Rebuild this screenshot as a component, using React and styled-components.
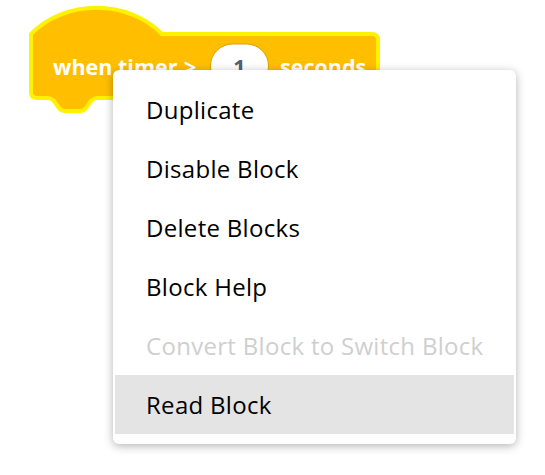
import React from "react";
import styled, { createGlobalStyle } from "styled-components";

const Global = createGlobalStyle`
  html, body { margin: 0; padding: 0; background: #ffffff; }
  body { width: 545px; height: 475px; overflow: hidden; }
`;

const Workspace = styled.div`
  position: relative;
  width: 545px;
  height: 475px;
  background: #ffffff;
`;

const BlockSvg = styled.svg`
  display: block;
  width: 400px;
  height: 130px;
`;

const BlockLabel = styled.text`
  font-family: "Open Sans", "Noto Sans", sans-serif;
  font-weight: 700;
  font-size: 21.5px;
  fill: ${(p) => p.$color || "#ffffff"};
`;

const Menu = styled.div`
  position: absolute;
  left: 113px;
  top: 70px;
  width: 403px;
  box-sizing: border-box;
  padding: 10px 2px;
  background: #ffffff;
  border-radius: 6px;
  box-shadow: 0 2px 10px rgba(0, 0, 0, 0.3);
  display: flex;
  flex-direction: column;
`;

const MenuItem = styled.div`
  height: 59px;
  display: flex;
  align-items: center;
  padding-left: 31px;
  font-family: "Open Sans", "Noto Sans", sans-serif;
  font-size: 24px;
  letter-spacing: 0.3px;
  color: ${(p) => (p.$disabled ? "#cfcfcf" : "#000000")};
  background: ${(p) => (p.$active ? "#e4e4e4" : "transparent")};
  white-space: nowrap;
`;

const blockPath = [
  "M 31 34",
  "C 65 -1 128 -1 162 34",
  "H 372",
  "Q 378 34 378 40",
  "V 92",
  "Q 378 98 372 98",
  "H 97",
  "C 94 98 93 99.5 91 101",
  "L 86 108",
  "C 84.5 110 83 111 80 111",
  "H 65",
  "C 62 111 60.5 110 59 108",
  "L 54 101",
  "C 52.5 99.5 51 98 48 98",
  "H 37",
  "Q 31 98 31 92",
  "Z",
].join(" ");

function HatBlock() {
  return (
    <BlockSvg viewBox="0 0 400 130">
      <path
        d={blockPath}
        fill="#FFBF00"
        stroke="#FFF200"
        strokeWidth="4"
        strokeLinejoin="round"
      />
      <BlockLabel x="53" y="75">when</BlockLabel>
      <BlockLabel x="118" y="75">timer</BlockLabel>
      <BlockLabel x="184" y="75">&gt;</BlockLabel>
      <rect
        x="210.5"
        y="44"
        width="58"
        height="44"
        rx="22"
        fill="#ffffff"
        stroke="#D9A200"
        strokeWidth="1"
      />
      <BlockLabel x="239.5" y="75" textAnchor="middle" $color="#575E75">
        1
      </BlockLabel>
      <BlockLabel x="280" y="75">seconds</BlockLabel>
    </BlockSvg>
  );
}

const items = [
  { label: "Duplicate" },
  { label: "Disable Block" },
  { label: "Delete Blocks" },
  { label: "Block Help" },
  { label: "Convert Block to Switch Block", disabled: true },
  { label: "Read Block", active: true },
];

export default function App() {
  return (
    <Workspace>
      <Global />
      <HatBlock />
      <Menu>
        {items.map((it) => (
          <MenuItem key={it.label} $disabled={it.disabled} $active={it.active}>
            {it.label}
          </MenuItem>
        ))}
      </Menu>
    </Workspace>
  );
}
